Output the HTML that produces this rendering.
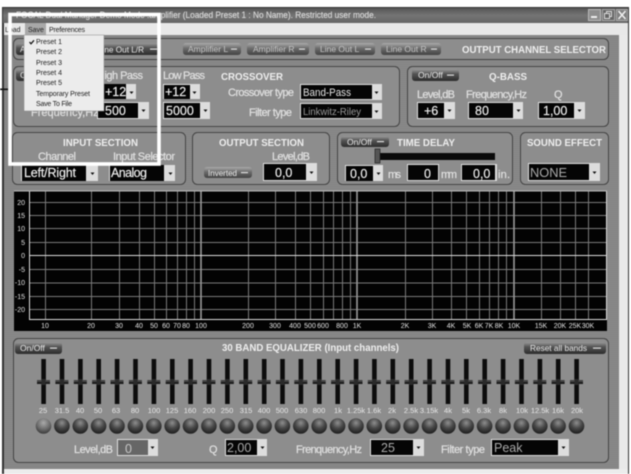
<!DOCTYPE html>
<html><head><meta charset="utf-8"><title>FOCAL Dual Manager</title>
<style>
html,body{margin:0;padding:0;background:#fff;width:631px;height:474px;overflow:hidden}
svg{display:block;font-family:"Liberation Sans",sans-serif;filter:blur(.45px)}
.l{fill:#e0e0e0;font-size:11px;stroke:#e0e0e0;stroke-width:.2}
.h{fill:#eee;font-size:10.5px;font-weight:bold}
.c{fill:#f0f0f0;font-size:12.5px;stroke:#f0f0f0;stroke-width:.15}
.b{fill:#e8e8e8;font-size:8.5px}
.d{fill:#c4c4c4;font-size:8.5px}
.m{fill:#222;font-size:7px}
.g{fill:#e4e4e4;font-size:7px}
.e{fill:#e8e8e8;font-size:7.5px;text-anchor:middle}
</style></head><body>
<svg width="631" height="474" viewBox="0 0 631 474" xmlns="http://www.w3.org/2000/svg">
<defs>
<pattern id="scan" width="3" height="2" patternUnits="userSpaceOnUse"><rect width="3" height="2" fill="#8a8a8a"/><rect width="3" height="1" fill="#848484"/></pattern>
<linearGradient id="tb" x1="0" y1="0" x2="0" y2="1"><stop offset="0" stop-color="#555"/><stop offset=".5" stop-color="#757575"/><stop offset="1" stop-color="#666"/></linearGradient>
<linearGradient id="on" x1="0" y1="0" x2="0" y2="1"><stop offset="0" stop-color="#999"/><stop offset=".4" stop-color="#555"/><stop offset="1" stop-color="#2c2c2c"/></linearGradient>
<linearGradient id="off" x1="0" y1="0" x2="0" y2="1"><stop offset="0" stop-color="#aaa"/><stop offset=".45" stop-color="#6c6c6c"/><stop offset="1" stop-color="#444"/></linearGradient>
<radialGradient id="ball" cx=".5" cy=".3" r=".7"><stop offset="0" stop-color="#8e8e8e"/><stop offset=".5" stop-color="#484848"/><stop offset="1" stop-color="#1c1c1c"/></radialGradient>
<radialGradient id="ball1" cx=".5" cy=".3" r=".7"><stop offset="0" stop-color="#aaa"/><stop offset=".6" stop-color="#6a6a6a"/><stop offset="1" stop-color="#3a3a3a"/></radialGradient>
<g id="ar"><rect width="9" height="14" fill="#ddd"/><path d="M2.5 6.5h4l-2 2.5z" fill="#111"/></g>
<g id="s"><rect x="-2.2" y="359" width="4.6" height="45" fill="#0c0c0c"/><rect x="-6.5" y="380" width="13" height="2.5" fill="#444"/><rect x="-6.5" y="382" width="13" height="2" fill="#1c1c1c"/><rect x="-2" y="379" width="4" height="6" fill="#2a2a2a"/></g>
<circle id="o" r="7.8" fill="url(#ball)"/>
</defs>

<!-- window -->
<rect x="2" y="7" width="627" height="467" fill="#333"/>
<rect x="4" y="35" width="615" height="434" fill="url(#scan)"/>
<rect x="619" y="35" width="9" height="439" fill="#e9e9e9"/>
<rect x="4" y="469" width="624" height="5" fill="#ececec"/>
<rect x="3" y="8" width="625" height="15" fill="url(#tb)"/>
<rect x="4" y="23" width="624" height="12" fill="#e8e8e8"/>
<text x="16" y="18" fill="#dcdcdc" font-size="9" stroke="#dcdcdc" stroke-width=".12" textLength="360" lengthAdjust="spacingAndGlyphs">FOCAL Dual Manager Demo Mode .amplifier (Loaded Preset 1 : No Name).  Restricted user mode.</text>
<rect x="588.5" y="9.5" width="12" height="11" fill="#8e8e8e" stroke="#bbb"/><rect x="591" y="16" width="6" height="2" fill="#eee"/>
<rect x="602.5" y="9.5" width="12" height="11" fill="#666" stroke="#aaa"/><rect x="606.5" y="11.5" width="5" height="5" fill="none" stroke="#ddd"/><rect x="604.5" y="13.5" width="5" height="5" fill="#666" stroke="#ddd"/>
<rect x="616.5" y="9.5" width="11" height="11" fill="#808080" stroke="#aaa"/><path d="M618.5 11l7 8M625.5 11l-7 8" stroke="#eee" stroke-width="1.6"/>

<!-- output channel selector -->
<rect x="13.5" y="38.5" width="595" height="21" rx="5" fill="#8d8d8d" stroke="#444"/>
<rect x="16" y="43" width="30" height="12" rx="3" fill="url(#on)"/><text x="20" y="52" class="b">A</text>
<rect x="46" y="43" width="113" height="12" rx="3" fill="url(#on)"/><text x="98" y="52.5" class="b" textLength="46" lengthAdjust="spacingAndGlyphs">Line Out L/R</text><rect x="150" y="48.5" width="7" height="1.2" fill="#ddd"/>
<rect x="183" y="43" width="58" height="12" rx="3" fill="url(#off)"/><text x="188" y="52" class="d">Amplifier L</text><rect x="231" y="48.5" width="6" height="1.2" fill="#ddd"/>
<rect x="247" y="43" width="62" height="12" rx="3" fill="url(#off)"/><text x="253" y="52" class="d">Amplifier R</text><rect x="299" y="48.5" width="6" height="1.2" fill="#ddd"/>
<rect x="315" y="43" width="60" height="12" rx="3" fill="url(#off)"/><text x="320" y="52" class="d">Line Out L</text><rect x="365" y="48.5" width="6" height="1.2" fill="#ddd"/>
<rect x="381" y="43" width="60" height="12" rx="3" fill="url(#off)"/><text x="386" y="52" class="d">Line Out R</text><rect x="431" y="48.5" width="6" height="1.2" fill="#ddd"/>
<text x="462" y="53" class="h" textLength="144" lengthAdjust="spacingAndGlyphs">OUTPUT CHANNEL SELECTOR</text>

<!-- crossover -->
<rect x="13.5" y="66.5" width="386" height="60" rx="5" fill="#8d8d8d" stroke="#444"/>
<rect x="16" y="69" width="30" height="12" rx="3" fill="url(#on)"/><text x="20" y="78" class="b">On</text>
<text x="97" y="79" class="l" textLength="46">High Pass</text>
<text x="163" y="79" class="l" textLength="42">Low Pass</text>
<text x="221" y="80" class="h" textLength="62" lengthAdjust="spacingAndGlyphs">CROSSOVER</text>
<rect x="104" y="84" width="32" height="15" fill="#ddd"/><rect x="104" y="84" width="22" height="15" fill="#050505"/><use href="#ar" x="127" y="85"/>
<text x="105" y="96" class="c">+12</text>
<rect x="163" y="84" width="37" height="15" fill="#ddd"/><rect x="164" y="85" width="26" height="14" fill="#050505"/><use href="#ar" x="190" y="85"/>
<text x="165" y="96" class="c">+12</text>
<text x="31" y="116" class="l">Frequency,Hz</text>
<rect x="97" y="102" width="52" height="17" fill="#ddd"/><rect x="98" y="103" width="40" height="15" fill="#050505"/><use href="#ar" x="139" y="103"/>
<text x="105" y="115" class="c">500</text>
<rect x="163" y="102" width="47" height="17" fill="#ddd"/><rect x="164" y="103" width="36" height="15" fill="#050505"/><use href="#ar" x="201" y="103"/>
<text x="166" y="115" class="c">5000</text>
<text x="228" y="96" class="l" textLength="66">Crossover type</text>
<text x="249" y="116" class="l" textLength="43">Filter type</text>
<rect x="300" y="84" width="82" height="16" fill="#ddd"/><rect x="301" y="85" width="71" height="14" fill="#050505"/><use href="#ar" x="372" y="85"/>
<text x="303" y="96" fill="#e4e4e4" font-size="11" textLength="48" lengthAdjust="spacingAndGlyphs">Band-Pass</text>
<rect x="300" y="103" width="82" height="16" fill="#ddd"/><rect x="301" y="104" width="71" height="14" fill="#050505"/><use href="#ar" x="372" y="104"/>
<text x="303" y="115" fill="#999" font-size="10" textLength="58" lengthAdjust="spacingAndGlyphs">Linkwitz-Riley</text>

<!-- q-bass -->
<rect x="407.5" y="66.5" width="201" height="60" rx="5" fill="#8d8d8d" stroke="#444"/>
<rect x="412" y="69" width="47" height="12" rx="3" fill="url(#on)"/><text x="418" y="78" class="b">On/Off</text><rect x="447" y="74.5" width="7" height="1.2" fill="#ddd"/>
<text x="489" y="80" class="h" textLength="38" lengthAdjust="spacingAndGlyphs">Q-BASS</text>
<text x="417" y="98" class="l" textLength="38">Level,dB</text>
<text x="466" y="98" class="l" textLength="61">Frequency,Hz</text>
<text x="554" y="98" class="l">Q</text>
<rect x="417" y="102" width="38" height="17" fill="#ddd"/><rect x="418" y="103" width="26" height="15" fill="#050505"/><use href="#ar" x="445" y="103"/>
<text x="424" y="115" class="c">+6</text>
<rect x="468" y="102" width="55" height="17" fill="#ddd"/><rect x="469" y="103" width="44" height="15" fill="#050505"/><use href="#ar" x="514" y="103"/>
<text x="475" y="115" class="c">80</text>
<rect x="538" y="102" width="47" height="17" fill="#ddd"/><rect x="539" y="103" width="35" height="15" fill="#050505"/><use href="#ar" x="575" y="103"/>
<text x="543" y="115" class="c">1,00</text>

<!-- input section -->
<rect x="12.5" y="132.5" width="173" height="52" rx="5" fill="#8d8d8d" stroke="#444"/>
<text x="63" y="146" class="h" textLength="75" lengthAdjust="spacingAndGlyphs">INPUT SECTION</text>
<text x="38" y="160" class="l" textLength="38">Channel</text>
<text x="113" y="160" class="l" textLength="62">Input Selector</text>
<rect x="21" y="165" width="77" height="16" fill="#ddd"/><rect x="22" y="165" width="64" height="16" fill="#050505"/><use href="#ar" x="88" y="166"/>
<text x="24" y="177" class="c" textLength="52">Left/Right</text>
<rect x="109" y="165" width="66" height="16" fill="#ddd"/><rect x="110" y="165" width="54" height="16" fill="#050505"/><use href="#ar" x="166" y="166"/>
<text x="111" y="177" class="c" textLength="36">Analog</text>

<!-- output section -->
<rect x="192.5" y="132.5" width="137" height="52" rx="5" fill="#8d8d8d" stroke="#444"/>
<text x="219" y="146" class="h" textLength="85" lengthAdjust="spacingAndGlyphs">OUTPUT SECTION</text>
<text x="272" y="160" class="l" textLength="38">Level,dB</text>
<rect x="204" y="167" width="48" height="11" rx="3" fill="url(#off)"/><text x="208" y="176" class="b" textLength="29" lengthAdjust="spacingAndGlyphs">Inverted</text><rect x="241" y="172" width="7" height="1.2" fill="#ddd"/>
<rect x="263" y="163" width="54" height="18" fill="#ddd"/><rect x="264" y="164" width="42" height="16" fill="#050505"/><use href="#ar" x="307" y="165"/>
<text x="275" y="177" class="c">0,0</text>

<!-- time delay -->
<rect x="337.5" y="132.5" width="175" height="52" rx="5" fill="#8d8d8d" stroke="#444"/>
<rect x="341" y="136" width="48" height="11" rx="3" fill="url(#on)"/><text x="347" y="145" class="b">On/Off</text><rect x="377" y="141" width="7" height="1.2" fill="#ddd"/>
<text x="397" y="146" class="h" textLength="58" lengthAdjust="spacingAndGlyphs">TIME DELAY</text>
<rect x="378" y="153" width="117" height="7" fill="#0a0a0a"/><rect x="375" y="149" width="5" height="14" fill="#555" stroke="#222" stroke-width=".7"/>
<rect x="345" y="165" width="38" height="16" fill="#ddd"/><rect x="346" y="166" width="27" height="15" fill="#050505"/><use href="#ar" x="374" y="166"/>
<text x="350" y="178" class="c">0,0</text>
<text x="388" y="178" class="l" textLength="13">ms</text>
<rect x="407" y="164" width="32" height="17" fill="#ddd"/><rect x="408" y="165" width="30" height="15" fill="#050505"/>
<text x="424" y="178" class="c">0</text>
<text x="441" y="178" class="l" textLength="16">mm</text>
<rect x="461" y="164" width="36" height="17" fill="#ddd"/><rect x="462" y="165" width="33" height="15" fill="#050505"/>
<text x="473" y="178" class="c">0,0</text>
<text x="498" y="178" class="l" textLength="12">in.</text>

<!-- sound effect -->
<rect x="520.5" y="132.5" width="88" height="52" rx="5" fill="#8d8d8d" stroke="#444"/>
<text x="527" y="146" class="h" textLength="75" lengthAdjust="spacingAndGlyphs">SOUND EFFECT</text>
<rect x="528" y="163" width="72" height="18" fill="#ddd"/><rect x="529" y="164" width="60" height="16" fill="#050505"/><use href="#ar" x="590" y="165"/>
<text x="530" y="177" fill="#aaa" font-size="12.5" textLength="37" lengthAdjust="spacingAndGlyphs">NONE</text>

<!-- graph -->
<rect x="14" y="191" width="593" height="140" fill="#030303"/>
<g stroke="#7a7a7a" stroke-width="1" fill="none">
<path d="M30 202.5H607M30 215.5H607M30 228.5H607M30 242.5H607M30 269.5H607M30 283H607M30 296.5H607M30 309.5H607"/>
<path d="M45.5 191V320M91.5 191V320M119.5 191V320M139.5 191V320M154.5 191V320M166.5 191V320M177.5 191V320M186.5 191V320M194.5 191V320M248.5 191V320M275.5 191V320M295.5 191V320M310.5 191V320M323.5 191V320M333.5 191V320M342.5 191V320M350.5 191V320M405.5 191V320M432.5 191V320M451.5 191V320M466.5 191V320M479.5 191V320M489.5 191V320M498.5 191V320M506.5 191V320M541.5 191V320M560.5 191V320M575.5 191V320M588.5 191V320"/>
</g>
<path d="M201 191V320M357 191V320M514 191V320" stroke="#999" stroke-width="1.6"/>
<path d="M30 255.5H607M29.5 191V320M29 319.5H607M606.5 191V320" stroke="#dcdcdc" stroke-width="1"/>
<path d="M14 191H607" stroke="#bbb" stroke-width="1"/>
<g class="g" text-anchor="end">
<text x="25" y="205">20</text><text x="25" y="218">15</text><text x="25" y="231">10</text><text x="25" y="245">5</text><text x="25" y="258">0</text><text x="25" y="272">-5</text><text x="25" y="285">-10</text><text x="25" y="299">-15</text><text x="25" y="312">-20</text>
</g>
<g class="g" text-anchor="middle">
<text x="45" y="328">10</text><text x="91" y="328">20</text><text x="119" y="328">30</text><text x="139" y="328">40</text><text x="154" y="328">50</text><text x="166" y="328">60</text><text x="177" y="328">70</text><text x="186" y="328">80</text><text x="201" y="328">100</text><text x="248" y="328">200</text><text x="275" y="328">300</text><text x="295" y="328">400</text><text x="310" y="328">500</text><text x="323" y="328">600</text><text x="342" y="328">800</text><text x="357" y="328">1K</text><text x="405" y="328">2K</text><text x="432" y="328">3K</text><text x="451" y="328">4K</text><text x="467" y="328">5K</text><text x="479" y="328">6K</text><text x="489" y="328">7K</text><text x="499" y="328">8K</text><text x="514" y="328">10K</text><text x="541" y="328">15K</text><text x="560" y="328">20K</text><text x="575" y="328">25K</text><text x="588" y="328">30K</text>
</g>

<!-- equalizer -->
<rect x="13.5" y="338.5" width="595" height="124" rx="5" fill="#8d8d8d" stroke="#444"/>
<rect x="15" y="342" width="47" height="12" rx="3" fill="url(#on)"/><text x="20" y="351" class="b">On/Off</text><rect x="50" y="347.5" width="7" height="1.2" fill="#ddd"/>
<text x="222" y="351" class="h" textLength="177" lengthAdjust="spacingAndGlyphs">30 BAND EQUALIZER (Input channels)</text>
<rect x="524" y="342" width="82" height="12" rx="3" fill="url(#on)"/><text x="530" y="351" class="b" textLength="57" lengthAdjust="spacingAndGlyphs">Reset all bands</text><rect x="593" y="347.5" width="8" height="1.2" fill="#ddd"/>

<use href="#s" x="43.5"/><use href="#s" x="61.9"/><use href="#s" x="80.3"/><use href="#s" x="98.6"/><use href="#s" x="117"/><use href="#s" x="135.4"/><use href="#s" x="153.8"/><use href="#s" x="172.2"/><use href="#s" x="190.5"/><use href="#s" x="208.9"/><use href="#s" x="227.3"/><use href="#s" x="245.7"/><use href="#s" x="264.1"/><use href="#s" x="282.4"/><use href="#s" x="300.8"/><use href="#s" x="319.2"/><use href="#s" x="337.6"/><use href="#s" x="356"/><use href="#s" x="374.3"/><use href="#s" x="392.7"/><use href="#s" x="411.1"/><use href="#s" x="429.5"/><use href="#s" x="447.9"/><use href="#s" x="466.2"/><use href="#s" x="484.6"/><use href="#s" x="503"/><use href="#s" x="521.4"/><use href="#s" x="539.8"/><use href="#s" x="558.1"/><use href="#s" x="576.5"/>

<text class="e" x="43" y="413">25</text><text class="e" x="62" y="413">31.5</text><text class="e" x="80" y="413">40</text><text class="e" x="98" y="413">50</text><text class="e" x="116" y="413">63</text><text class="e" x="135" y="413">80</text><text class="e" x="154" y="413">100</text><text class="e" x="172" y="413">125</text><text class="e" x="190" y="413">160</text><text class="e" x="209" y="413">200</text><text class="e" x="227" y="413">250</text><text class="e" x="246" y="413">315</text><text class="e" x="264" y="413">400</text><text class="e" x="282" y="413">500</text><text class="e" x="301" y="413">630</text><text class="e" x="319" y="413">800</text><text class="e" x="338" y="413">1k</text><text class="e" x="356" y="413">1.25k</text><text class="e" x="374" y="413">1.6k</text><text class="e" x="392" y="413">2k</text><text class="e" x="411" y="413">2.5k</text><text class="e" x="429" y="413">3.15k</text><text class="e" x="448" y="413">4k</text><text class="e" x="466" y="413">5k</text><text class="e" x="484" y="413">6.3k</text><text class="e" x="503" y="413">8k</text><text class="e" x="522" y="413">10k</text><text class="e" x="540" y="413">12.5k</text><text class="e" x="558" y="413">16k</text><text class="e" x="577" y="413">20k</text>

<circle r="7.8" cx="43.5" cy="426" fill="url(#ball1)"/>
<use href="#o" x="61.9" y="426"/><use href="#o" x="80.3" y="426"/><use href="#o" x="98.6" y="426"/><use href="#o" x="117" y="426"/><use href="#o" x="135.4" y="426"/><use href="#o" x="153.8" y="426"/><use href="#o" x="172.2" y="426"/><use href="#o" x="190.5" y="426"/><use href="#o" x="208.9" y="426"/><use href="#o" x="227.3" y="426"/><use href="#o" x="245.7" y="426"/><use href="#o" x="264.1" y="426"/><use href="#o" x="282.4" y="426"/><use href="#o" x="300.8" y="426"/><use href="#o" x="319.2" y="426"/><use href="#o" x="337.6" y="426"/><use href="#o" x="356" y="426"/><use href="#o" x="374.3" y="426"/><use href="#o" x="392.7" y="426"/><use href="#o" x="411.1" y="426"/><use href="#o" x="429.5" y="426"/><use href="#o" x="447.9" y="426"/><use href="#o" x="466.2" y="426"/><use href="#o" x="484.6" y="426"/><use href="#o" x="503" y="426"/><use href="#o" x="521.4" y="426"/><use href="#o" x="539.8" y="426"/><use href="#o" x="558.1" y="426"/><use href="#o" x="576.5" y="426"/>

<text x="74" y="453" class="l" textLength="39">Level,dB</text>
<rect x="117" y="439" width="41" height="17" fill="#ddd"/><rect x="118" y="440" width="30" height="15" fill="#666"/><use href="#ar" x="148" y="440"/>
<text x="125" y="453" fill="#c8c8c8" font-size="12.5">0</text>
<text x="209" y="453" class="l">Q</text>
<rect x="225" y="439" width="42" height="17" fill="#ddd"/><rect x="226" y="440" width="31" height="15" fill="#050505"/><use href="#ar" x="258" y="440"/>
<text x="227" y="452" fill="#aaa" font-size="12.5">2,00</text>
<text x="296" y="453" class="l" textLength="66">Frenquency,Hz</text>
<rect x="370" y="439" width="54" height="17" fill="#ddd"/><rect x="371" y="440" width="42" height="15" fill="#050505"/><use href="#ar" x="414" y="440"/>
<text x="381" y="452" fill="#aaa" font-size="12.5">25</text>
<text x="441" y="453" class="l" textLength="44">Filter type</text>
<rect x="491" y="439" width="78" height="17" fill="#ddd"/><rect x="492" y="440" width="66" height="15" fill="#050505"/><use href="#ar" x="559" y="440"/>
<text x="494" y="452" fill="#aaa" font-size="12.5">Peak</text>

<!-- menu overlay -->
<rect x="12" y="23" width="145" height="12" fill="#e8e8e8"/>
<rect x="25" y="23" width="21" height="12" fill="#a8a8a8"/>
<text x="5" y="32" class="m">Load</text><text x="28" y="32" class="m">Save</text><text x="49" y="32" class="m" textLength="36">Preferences</text>
<rect x="24" y="35" width="80" height="76" fill="#ececec" stroke="#888" stroke-width=".5"/>
<path d="M29.5 42l1.5 1.8 3-3.5" stroke="#111" stroke-width="1.2" fill="none"/>
<text x="36" y="44" class="m">Preset 1</text><text x="36" y="54" class="m">Preset 2</text><text x="36" y="65" class="m">Preset 3</text><text x="36" y="75" class="m">Preset 4</text><text x="36" y="85" class="m">Preset 5</text><text x="36" y="96" class="m" textLength="54">Temporary Preset</text><text x="36" y="106" class="m" textLength="36">Save To File</text>

<!-- white highlight frame -->
<rect x="10" y="14.5" width="149" height="149.5" fill="none" stroke="#fff" stroke-width="3.6"/>
<rect x="0" y="88.5" width="8" height="1.6" fill="#111"/>
</svg>
</body></html>
